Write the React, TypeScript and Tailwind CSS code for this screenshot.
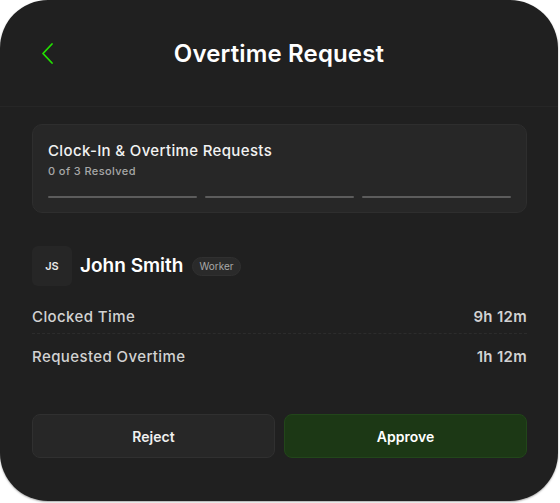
const font = { fontFamily: 'Inter, "Noto Sans", sans-serif' };

const BackChevron = () => (
  <svg
    className="absolute left-[41px] top-[42px]"
    width="14"
    height="23"
    viewBox="0 0 14 23"
    fill="none"
  >
    <polyline points="11,2 2,11.5 11,21" stroke="#22e000" strokeWidth="1.8" strokeLinecap="round" strokeLinejoin="round" />
  </svg>
);

export default function App() {
  return (
    <div className="w-[560px] h-[503px] bg-white" style={font}>
      <div className="w-[558px] h-[501px] rounded-[48px] bg-[#202020] shadow-[0_1px_2px_rgba(0,0,0,0.35)] overflow-hidden flex flex-col">
        {/* Header */}
        <header className="h-[107px] shrink-0 border-b border-[#262626] relative flex items-center justify-center">
          <BackChevron />
          <h1 className="text-[24px] font-semibold text-white tracking-[0.15px] mt-[1px]">Overtime Request</h1>
        </header>

        <div className="pl-[32px] pr-[31px] pt-[17px] flex flex-col">
          {/* Progress card */}
          <div className="h-[89px] rounded-[10px] bg-[#272727] border border-[#2e2e2e] px-[15px] pt-[16px]">
            <div className="text-[15px] font-medium text-[#f2f2f2] leading-[20px] tracking-[0.35px]">Clock-In &amp; Overtime Requests</div>
            <div className="text-[11px] font-medium text-[#a8a8a8] mt-[3px] leading-[14px] tracking-[0.4px]">0 of 3 Resolved</div>
            <div className="flex gap-[8px] mt-[18px]">
              <div className="flex-1 h-[2px] rounded-full bg-[#5c5c5c]" />
              <div className="flex-1 h-[2px] rounded-full bg-[#5c5c5c]" />
              <div className="flex-1 h-[2px] rounded-full bg-[#5c5c5c]" />
            </div>
          </div>

          {/* Worker */}
          <div className="flex items-center mt-[33px]">
            <div className="w-[40px] h-[40px] rounded-[6px] bg-[#262626] flex items-center justify-center text-[11px] font-semibold text-[#e8e8e8]">JS</div>
            <div className="ml-[8px] text-[19px] font-semibold text-white">John Smith</div>
            <div className="ml-[9px] h-[19px] px-[6px] rounded-full bg-[#2a2a2a] border border-[#303030] flex items-center text-[10px] text-[#a8a8a8]">Worker</div>
          </div>

          {/* Rows */}
          <div className="mt-[16px] flex flex-col">
            <div className="h-[32px] flex items-center justify-between border-b border-dashed border-[#2c2c2c]">
              <span className="text-[15px] font-medium text-[#d2d2d2] tracking-[0.4px]">Clocked Time</span>
              <span className="text-[15px] font-semibold text-[#d2d2d2] tracking-[0.3px]">9h 12m</span>
            </div>
            <div className="h-[44px] flex items-center justify-between pt-[3px]">
              <span className="text-[15px] font-medium text-[#d2d2d2] tracking-[0.4px]">Requested Overtime</span>
              <span className="text-[15px] font-semibold text-[#d2d2d2] tracking-[0.3px]">1h 12m</span>
            </div>
          </div>

          {/* Actions */}
          <div className="flex gap-[9px] mt-[36px]">
            <button className="flex-1 h-[44px] rounded-[8px] bg-[#272727] border border-[#303030] text-[14px] font-semibold text-[#f0f0f0]">Reject</button>
            <button className="flex-1 h-[44px] rounded-[8px] bg-[#1c3815] border border-[#22461a] text-[14px] font-semibold text-white">Approve</button>
          </div>
        </div>
      </div>
    </div>
  );
}
